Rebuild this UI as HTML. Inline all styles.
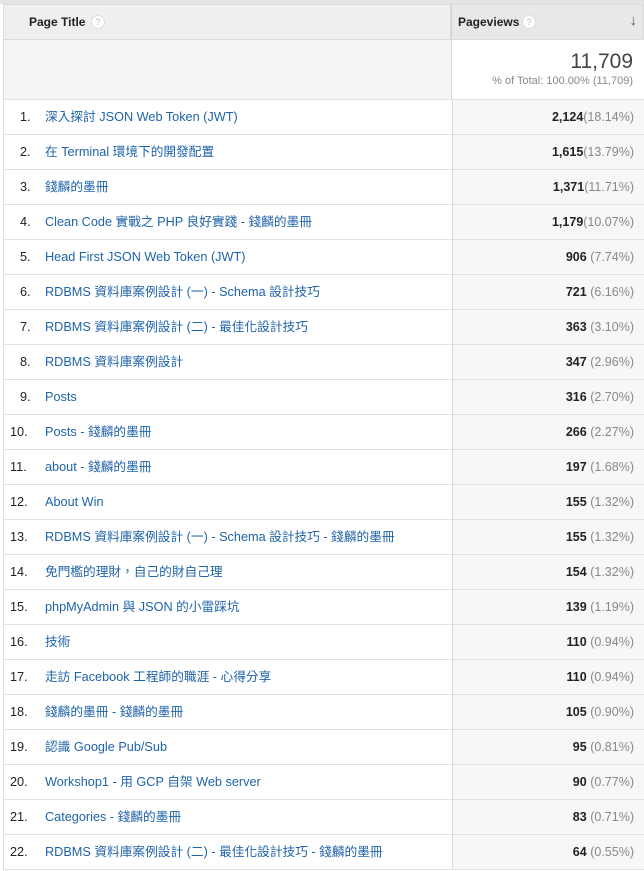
<!DOCTYPE html>
<html><head><meta charset="utf-8"><style>
*{margin:0;padding:0;box-sizing:border-box}
body{width:644px;height:871px;background:#fff;font-family:"Liberation Sans","Noto Sans CJK TC",sans-serif;position:relative;overflow:hidden}
.top{position:absolute;left:0;top:0;width:644px;height:4px;background:#e4e4e4}
.hl{position:absolute;left:3px;top:4px;width:448px;height:36px;background:#efefef;border:1px solid #dcdcdc}
.hr{position:absolute;left:451px;top:4px;width:193px;height:36px;background:#e8e8e8;border:1px solid #dcdcdc;border-left:1px solid #d0d0d0}
.ht{position:absolute;top:0;line-height:34px;font-size:12px;font-weight:bold;color:#222}
.q{position:absolute;top:10px;width:14px;height:14px;border:1px solid #ddd;border-radius:50%;background:#fff;font-size:9px;color:#bbb;text-align:center;line-height:12px}
.tl{position:absolute;left:3px;top:40px;width:448px;height:59px;background:#f5f5f5;border-left:1px solid #dcdcdc}
.tr{position:absolute;left:451px;top:40px;width:193px;height:59px;background:#fff;border-left:1px solid #dcdcdc}
.big{position:absolute;right:11px;top:50px;font-size:21px;line-height:24px;color:#444}
.sub{position:absolute;right:11px;top:75px;font-size:11px;line-height:13px;color:#888}
.row{position:absolute;left:3px;width:641px;height:35px;border-top:1px solid #e2e2e2;border-left:1px solid #dcdcdc;font-size:12.7px;line-height:35px;white-space:nowrap}
.row .n{position:absolute;left:16px;top:0;color:#222;font-family:"Liberation Sans",sans-serif}
.row .t{position:absolute;left:41px;top:0;color:#1f63a8;line-height:35px;height:34px}
.row .v{position:absolute;left:448px;top:0;width:193px;height:34px;background:#f7f7f7;border-left:1px solid #dcdcdc}
.row .v span{position:absolute;right:11px;top:0;line-height:35px}
.row b{color:#222;font-size:12.5px}
.row i{font-style:normal;color:#888;font-size:12.5px}
</style></head><body>
<div class="top"></div>
<div class="hl"><span class="ht" style="left:25px">Page Title</span><span class="q" style="left:87px">?</span></div>
<div class="hr"><span class="ht" style="left:6px">Pageviews</span><span class="q" style="left:70px">?</span><span style="position:absolute;right:6px;top:0;line-height:32px;font-size:15px;color:#555">&#8595;</span></div>
<div class="tl"></div><div class="tr"></div>
<div class="big">11,709</div>
<div class="sub">% of Total: 100.00% (11,709)</div>
<div class="row" style="top:99px"><span class="n">1.</span><span class="t">深入探討 JSON Web Token (JWT)</span><div class="v"><span><b>2,124</b><i>(18.14%)</i></span></div></div>
<div class="row" style="top:134px"><span class="n">2.</span><span class="t">在 Terminal 環境下的開發配置</span><div class="v"><span><b>1,615</b><i>(13.79%)</i></span></div></div>
<div class="row" style="top:169px"><span class="n">3.</span><span class="t">錢麟的墨冊</span><div class="v"><span><b>1,371</b><i>(11.71%)</i></span></div></div>
<div class="row" style="top:204px"><span class="n">4.</span><span class="t">Clean Code 實戰之 PHP 良好實踐 - 錢麟的墨冊</span><div class="v"><span><b>1,179</b><i>(10.07%)</i></span></div></div>
<div class="row" style="top:239px"><span class="n">5.</span><span class="t">Head First JSON Web Token (JWT)</span><div class="v"><span><b>906</b> <i>(7.74%)</i></span></div></div>
<div class="row" style="top:274px"><span class="n">6.</span><span class="t">RDBMS 資料庫案例設計 (一) - Schema 設計技巧</span><div class="v"><span><b>721</b> <i>(6.16%)</i></span></div></div>
<div class="row" style="top:309px"><span class="n">7.</span><span class="t">RDBMS 資料庫案例設計 (二) - 最佳化設計技巧</span><div class="v"><span><b>363</b> <i>(3.10%)</i></span></div></div>
<div class="row" style="top:344px"><span class="n">8.</span><span class="t">RDBMS 資料庫案例設計</span><div class="v"><span><b>347</b> <i>(2.96%)</i></span></div></div>
<div class="row" style="top:379px"><span class="n">9.</span><span class="t">Posts</span><div class="v"><span><b>316</b> <i>(2.70%)</i></span></div></div>
<div class="row" style="top:414px"><span class="n" style="left:6px">10.</span><span class="t">Posts - 錢麟的墨冊</span><div class="v"><span><b>266</b> <i>(2.27%)</i></span></div></div>
<div class="row" style="top:449px"><span class="n" style="left:6px">11.</span><span class="t">about - 錢麟的墨冊</span><div class="v"><span><b>197</b> <i>(1.68%)</i></span></div></div>
<div class="row" style="top:484px"><span class="n" style="left:6px">12.</span><span class="t">About Win</span><div class="v"><span><b>155</b> <i>(1.32%)</i></span></div></div>
<div class="row" style="top:519px"><span class="n" style="left:6px">13.</span><span class="t">RDBMS 資料庫案例設計 (一) - Schema 設計技巧 - 錢麟的墨冊</span><div class="v"><span><b>155</b> <i>(1.32%)</i></span></div></div>
<div class="row" style="top:554px"><span class="n" style="left:6px">14.</span><span class="t">免門檻的理財，自己的財自己理</span><div class="v"><span><b>154</b> <i>(1.32%)</i></span></div></div>
<div class="row" style="top:589px"><span class="n" style="left:6px">15.</span><span class="t">phpMyAdmin 與 JSON 的小雷踩坑</span><div class="v"><span><b>139</b> <i>(1.19%)</i></span></div></div>
<div class="row" style="top:624px"><span class="n" style="left:6px">16.</span><span class="t">技術</span><div class="v"><span><b>110</b> <i>(0.94%)</i></span></div></div>
<div class="row" style="top:659px"><span class="n" style="left:6px">17.</span><span class="t">走訪 Facebook 工程師的職涯 - 心得分享</span><div class="v"><span><b>110</b> <i>(0.94%)</i></span></div></div>
<div class="row" style="top:694px"><span class="n" style="left:6px">18.</span><span class="t">錢麟的墨冊 - 錢麟的墨冊</span><div class="v"><span><b>105</b> <i>(0.90%)</i></span></div></div>
<div class="row" style="top:729px"><span class="n" style="left:6px">19.</span><span class="t">認識 Google Pub/Sub</span><div class="v"><span><b>95</b> <i>(0.81%)</i></span></div></div>
<div class="row" style="top:764px"><span class="n" style="left:6px">20.</span><span class="t">Workshop1 - 用 GCP 自架 Web server</span><div class="v"><span><b>90</b> <i>(0.77%)</i></span></div></div>
<div class="row" style="top:799px"><span class="n" style="left:6px">21.</span><span class="t">Categories - 錢麟的墨冊</span><div class="v"><span><b>83</b> <i>(0.71%)</i></span></div></div>
<div class="row" style="top:834px;border-bottom:1px solid #e2e2e2;height:36px"><span class="n" style="left:6px">22.</span><span class="t">RDBMS 資料庫案例設計 (二) - 最佳化設計技巧 - 錢麟的墨冊</span><div class="v"><span><b>64</b> <i>(0.55%)</i></span></div></div>
</body></html>
